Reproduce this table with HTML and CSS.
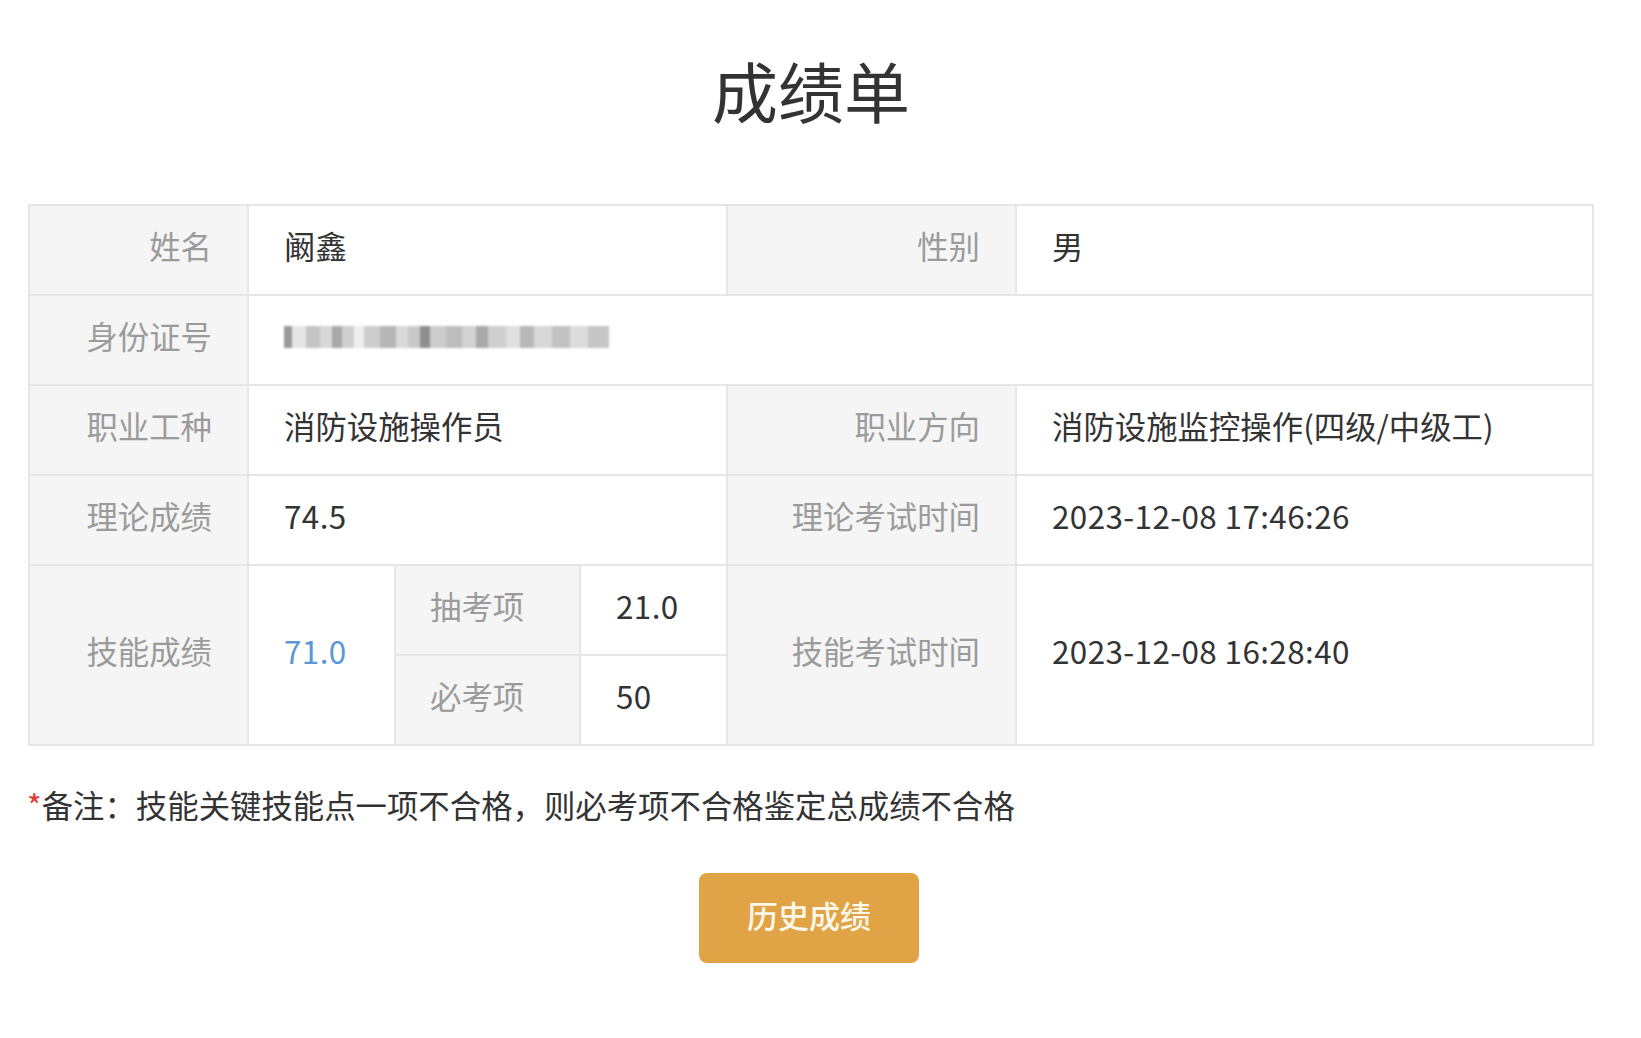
FILE: index.html
```html
<!DOCTYPE html>
<html lang="zh-CN">
<head>
<meta charset="utf-8">
<title>成绩单</title>
<link rel="stylesheet" href="styles.css">
</head>
<body>
<div class="page">
  <h1 class="title">成绩单</h1>
  <div class="sheet">
    <div class="cell label">姓名</div>
    <div class="cell value span3">阚鑫</div>
    <div class="cell label">性别</div>
    <div class="cell value">男</div>

    <div class="cell label">身份证号</div>
    <div class="cell value span5"><span class="mosaic" aria-label="身份证号已隐藏"></span></div>

    <div class="cell label">职业工种</div>
    <div class="cell value span3">消防设施操作员</div>
    <div class="cell label">职业方向</div>
    <div class="cell value">消防设施监控操作(四级/中级工)</div>

    <div class="cell label">理论成绩</div>
    <div class="cell value span3 num">74.5</div>
    <div class="cell label">理论考试时间</div>
    <div class="cell value num">2023-12-08 17:46:26</div>

    <div class="cell label rspan2">技能成绩</div>
    <div class="cell value rspan2 blue num">71.0</div>
    <div class="cell label left">抽考项</div>
    <div class="cell value num">21.0</div>
    <div class="cell label rspan2">技能考试时间</div>
    <div class="cell value rspan2 num">2023-12-08 16:28:40</div>
    <div class="cell label left">必考项</div>
    <div class="cell value num">50</div>
  </div>
  <p class="note"><span class="star">*</span>备注：技能关键技能点一项不合格，则必考项不合格鉴定总成绩不合格</p>
  <div class="actions">
    <button class="btn" type="button">历史成绩</button>
  </div>
</div>
</body>
</html>
```
FILE: styles.css
```css
html, body {
  margin: 0;
  padding: 0;
  background: #ffffff;
}

body {
  font-family: "Noto Sans CJK SC", "Noto Sans", sans-serif;
  color: #333333;
}

.page {
  width: 1566px;
  padding-left: 28px;
}

.title {
  margin: 0;
  padding-top: 44px;
  line-height: 90px;
  font-size: 66px;
  font-weight: 400;
  text-align: center;
  color: #333333;
}

.sheet {
  margin-top: 70px;
  display: grid;
  grid-template-columns: 217px 145px 183px 145px 287px 575px;
  grid-auto-rows: 88px;
  gap: 2px;
  padding: 2px;
  background: #e6e6e6;
}

.cell {
  display: flex;
  align-items: center;
  font-size: 31.4px;
  line-height: 40px;
  white-space: nowrap;
  padding-bottom: 8px;
  box-sizing: border-box;
}

.label {
  background: #f5f5f5;
  color: #9b9b9b;
  justify-content: flex-end;
  padding-right: 35px;
}

.label.left {
  justify-content: flex-start;
  padding-right: 0;
  padding-left: 34px;
}

.value {
  background: #ffffff;
  color: #333333;
  padding-left: 35px;
}

.num {
  letter-spacing: 0.4px;
}

.span3 { grid-column: span 3; }
.span5 { grid-column: span 5; }
.rspan2 { grid-row: span 2; }

.blue { color: #5b97d6; }

.mosaic {
  display: block;
  width: 325px;
  height: 22px;
  margin-top: 2px;
  filter: blur(1.2px);
  background:
    linear-gradient(90deg,
      #9a9a9a 0 8px,
      #e6e6e6 8px 22px,
      #c4c4c4 22px 36px,
      #d8d8d8 36px 48px,
      #a8a8a8 48px 58px,
      #cfcfcf 58px 70px,
      #eeeeee 70px 80px,
      #cdcdcd 80px 96px,
      #b6b6b6 96px 112px,
      #d9d9d9 112px 124px,
      #c9c9c9 124px 136px,
      #8f8f8f 136px 146px,
      #cccccc 146px 162px,
      #bdbdbd 162px 178px,
      #d2d2d2 178px 192px,
      #a9a9a9 192px 204px,
      #cfcfcf 204px 222px,
      #e0e0e0 222px 236px,
      #b8b8b8 236px 250px,
      #d8d8d8 250px 268px,
      #c2c2c2 268px 286px,
      #dcdcdc 286px 304px,
      #c6c6c6 304px 325px);
}

.note {
  margin: 35px 0 0 -1px;
  font-size: 31.4px;
  line-height: 48px;
  color: #333333;
  white-space: nowrap;
}

.star {
  color: #e53a35;
}

.actions {
  display: flex;
  justify-content: center;
  margin-top: 44px;
  padding-right: 4px;
}

.btn {
  width: 220px;
  height: 90px;
  border: none;
  border-radius: 8px;
  background: #e0a447;
  color: #fff8ea;
  font-family: "Noto Sans CJK SC", "Noto Sans", sans-serif;
  font-size: 31px;
  font-weight: 500;
  padding: 0 0 8px 0;
}
```
